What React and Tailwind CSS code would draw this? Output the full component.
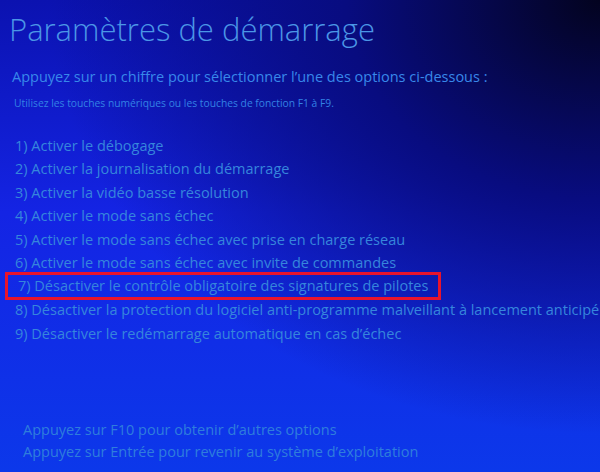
const options = [
  "1) Activer le débogage",
  "2) Activer la  journalisation du démarrage",
  "3) Activer la vidéo basse résolution",
  "4) Activer le mode sans échec",
  "5) Activer le mode sans échec avec prise en charge réseau",
  "6) Activer le mode sans échec avec invite de commandes",
  "7) Désactiver le contrôle obligatoire des signatures de pilotes",
  "8) Désactiver la protection du logiciel anti-programme malveillant à lancement anticipé",
  "9) Désactiver le redémarrage automatique en cas d’échec",
];

export default function App() {
  return (
    <div
      className="w-[600px] h-[472px] overflow-hidden flex flex-col text-[#3686dc] bg-[radial-gradient(ellipse_at_100%_0%,#03031f_0%,#080c80_30%,rgba(10,20,200,0)_65%),linear-gradient(to_bottom,#0b12b0_0%,#1424e4_45%,#0c38ea_100%)]"
      style={{ fontFamily: '"Open Sans", "Noto Sans", sans-serif' }}
    >
      <h1 className="ml-[9px] mt-[9px] text-[31px] leading-[40px] font-light text-[#4b96e6] whitespace-nowrap">
        Paramètres de démarrage
      </h1>
      <p className="ml-[12px] mt-[18px] text-[14.5px] leading-[20px] text-[#3888ea] whitespace-nowrap">
        Appuyez sur un chiffre pour sélectionner l’une des options ci-dessous :
      </p>
      <p className="ml-[14px] mt-[9px] text-[10.3px] leading-[14px] text-[#3382e4] whitespace-nowrap">
        Utilisez les touches numériques ou les touches de fonction F1 à F9.
      </p>
      <ul className="mt-[24px] flex flex-col">
        {options.map((o, i) =>
          i === 6 ? (
            <li
              key={i}
              className="ml-[5px] -my-[2px] w-[436px] h-[28px] border-[3px] border-[#e8142c] pl-[10px] flex items-center text-[14.5px] whitespace-nowrap"
            >
              {o}
            </li>
          ) : (
            <li
              key={i}
              className="ml-[15px] h-[23.4px] leading-[23.4px] text-[14.5px] whitespace-nowrap"
            >
              {o}
            </li>
          )
        )}
      </ul>
      <div className="mt-auto mb-[9px] ml-[23px] flex flex-col text-[14.5px] text-[#2f7edc]">
        <p className="leading-[22px]">Appuyez sur F10 pour obtenir d’autres options</p>
        <p className="leading-[22px]">Appuyez sur Entrée pour revenir au système d’exploitation</p>
      </div>
    </div>
  );
}
